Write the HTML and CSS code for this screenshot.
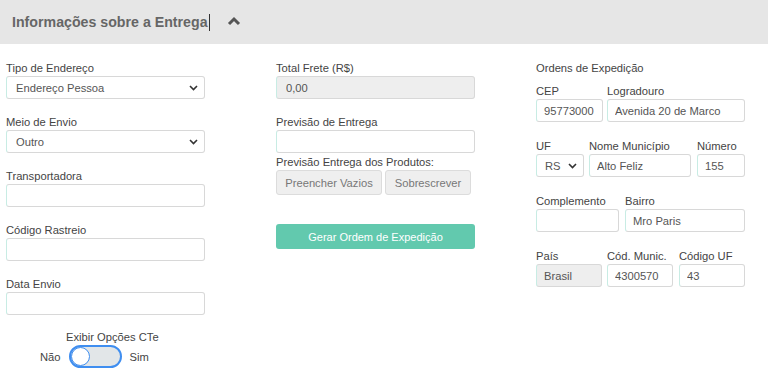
FILE: index.html
```html
<!DOCTYPE html>
<html lang="pt">
<head>
<meta charset="utf-8">
<link rel="stylesheet" href="styles.css">
</head>
<body>
<div class="header">
  <span class="title">Informações sobre a Entrega</span><span class="caret"></span>
  <svg class="chev-up" width="14" height="10" viewBox="0 0 14 10"><path d="M2 8 L7 3 L12 8" fill="none" stroke="#555" stroke-width="3"/></svg>
</div>
<div class="content">
  <div class="col col1">
    <div class="field">
      <label>Tipo de Endereço</label>
      <div class="sel"><select class="ctl"><option>Endereço Pessoa</option></select><svg class="dd" width="9" height="6" viewBox="0 0 9 6"><path d="M1 1 L4.5 4.5 L8 1" fill="none" stroke="#333" stroke-width="1.6"/></svg></div>
    </div>
    <div class="field">
      <label>Meio de Envio</label>
      <div class="sel"><select class="ctl"><option>Outro</option></select><svg class="dd" width="9" height="6" viewBox="0 0 9 6"><path d="M1 1 L4.5 4.5 L8 1" fill="none" stroke="#333" stroke-width="1.6"/></svg></div>
    </div>
    <div class="field">
      <label>Transportadora</label>
      <input class="ctl" type="text">
    </div>
    <div class="field">
      <label>Código Rastreio</label>
      <input class="ctl" type="text">
    </div>
    <div class="field">
      <label>Data Envio</label>
      <input class="ctl" type="text">
    </div>
    <div class="cte">
      <div class="cte-label">Exibir Opções CTe</div>
      <div class="cte-row">
        <span>Não</span>
        <span class="toggle"><span class="knob"></span></span>
        <span>Sim</span>
      </div>
    </div>
  </div>
  <div class="col col2">
    <div class="field">
      <label>Total Frete (R$)</label>
      <input class="ctl disabled" type="text" value="0,00" readonly>
    </div>
    <div class="field tight">
      <label>Previsão de Entrega</label>
      <input class="ctl" type="text">
    </div>
    <div class="prod-label">Previsão Entrega dos Produtos:</div>
    <div class="btns">
      <button class="btn-light b1">Preencher Vazios</button>
      <button class="btn-light b2">Sobrescrever</button>
    </div>
    <button class="btn-green">Gerar Ordem de Expedição</button>
  </div>
  <div class="col col3">
    <div class="sec-title">Ordens de Expedição</div>
    <div class="row">
      <div class="f w67"><label>CEP</label><input class="ctl" type="text" value="95773000"></div>
      <div class="f w138"><label>Logradouro</label><input class="ctl" type="text" value="Avenida 20 de Marco"></div>
    </div>
    <div class="row">
      <div class="f w48"><label>UF</label><div class="sel"><select class="ctl uf"><option>RS</option></select><svg class="dd" width="9" height="6" viewBox="0 0 9 6"><path d="M1 1 L4.5 4.5 L8 1" fill="none" stroke="#333" stroke-width="1.6"/></svg></div></div>
      <div class="f w102 g5"><label>Nome Município</label><input class="ctl" type="text" value="Alto Feliz"></div>
      <div class="f w48 g6"><label>Número</label><input class="ctl" type="text" value="155"></div>
    </div>
    <div class="row">
      <div class="f w83"><label>Complemento</label><input class="ctl" type="text"></div>
      <div class="f w120 g6"><label>Bairro</label><input class="ctl" type="text" value="Mro Paris"></div>
    </div>
    <div class="row">
      <div class="f w66"><label>País</label><input class="ctl disabled" type="text" value="Brasil" readonly></div>
      <div class="f w66 g5"><label>Cód. Munic.</label><input class="ctl" type="text" value="4300570"></div>
      <div class="f w66 g6"><label>Código UF</label><input class="ctl" type="text" value="43"></div>
    </div>
  </div>
</div>
</body>
</html>
```
FILE: styles.css
```css
* { box-sizing: border-box; }
body {
  margin: 0;
  font-family: "Liberation Sans", Arial, sans-serif;
  font-size: 11.2px;
  color: #444;
  background: #fff;
}
.header {
  height: 44px;
  background: #e6e6e6;
  display: flex;
  align-items: center;
  padding-left: 12px;
}
.title {
  font-size: 14.2px;
  font-weight: bold;
  color: #666;
}
.caret {
  display: inline-block;
  width: 1px;
  height: 17px;
  background: #333;
  margin-left: 1px;
}
.chev-up { margin-left: 17px; margin-top: -2px; }
.content {
  display: grid;
  grid-template-columns: 270px 260px 1fr;
  padding: 17px 0 0 6px;
}
.col1 .ctl, .col2 .ctl, .col1 .sel { width: 199px; }
.field { display: flex; flex-direction: column; margin-bottom: 16px; }
.field.tight { margin-bottom: 0; }
label { display: block; line-height: 15px; color: #444; margin-bottom: 0; }
.ctl {
  display: block;
  height: 23px;
  border: 1px solid #d8d8d8;
  border-left-color: #c8ece4;
  border-radius: 3px;
  background: #fff;
  font-family: inherit;
  font-size: 11.2px;
  color: #555;
  padding: 0 9px;
  outline: none;
  margin: 0;
}
select.ctl { -webkit-appearance: none; appearance: none; }
.sel { position: relative; }
.sel .dd { position: absolute; right: 7px; top: 9px; pointer-events: none; }
.ctl.disabled { background: #eee; }
.cte { width: 200px; margin-top: -1px; }
.cte-label { line-height: 14px; padding-left: 60px; }
.cte-row { display: flex; align-items: center; gap: 8px; margin-top: 1px; padding-left: 34px; }
.toggle {
  position: relative;
  display: inline-block;
  width: 53px;
  height: 23px;
  border: 2px solid #3f8ef0;
  border-radius: 12px;
  background: #e2e6e8;
}
.knob {
  position: absolute;
  left: 0; top: 0;
  width: 19px; height: 19px;
  border-radius: 50%;
  background: #fff;
  border: 1px solid #3f8ef0;
}
.prod-label { line-height: 14px; margin-top: 2px; }
.btns { display: flex; gap: 3px; margin-top: 1px; }
.btn-light {
  height: 25px;
  border: 1px solid #dcdcdc;
  background: #efefef;
  color: #777;
  border-radius: 3px;
  font-family: inherit;
  font-size: 11.2px;
  padding: 0;
}
.b1 { width: 106px; }
.b2 { width: 86px; }
.btn-green {
  display: block;
  margin-top: 29px;
  width: 199px;
  height: 25px;
  border: none;
  border-radius: 3px;
  background: #62c9ae;
  color: #fff;
  font-family: inherit;
  font-size: 11px;
}
.sec-title { line-height: 14px; margin-bottom: 9px; }
.row { display: flex; gap: 4px; margin-bottom: 17px; }
.row .ctl { width: 100%; padding: 0 7px; }
.f { display: flex; flex-direction: column; }
.g5 { margin-left: 1px; }
.g6 { margin-left: 2px; }
.w48 { width: 48px; }
.w66 { width: 66px; }
.w67 { width: 67px; }
.w83 { width: 83px; }
.w102 { width: 102px; }
.w120 { width: 120px; }
.w138 { width: 138px; }
.row .ctl.uf { padding-left: 8px; }
.row .dd { right: 7px; }
```
